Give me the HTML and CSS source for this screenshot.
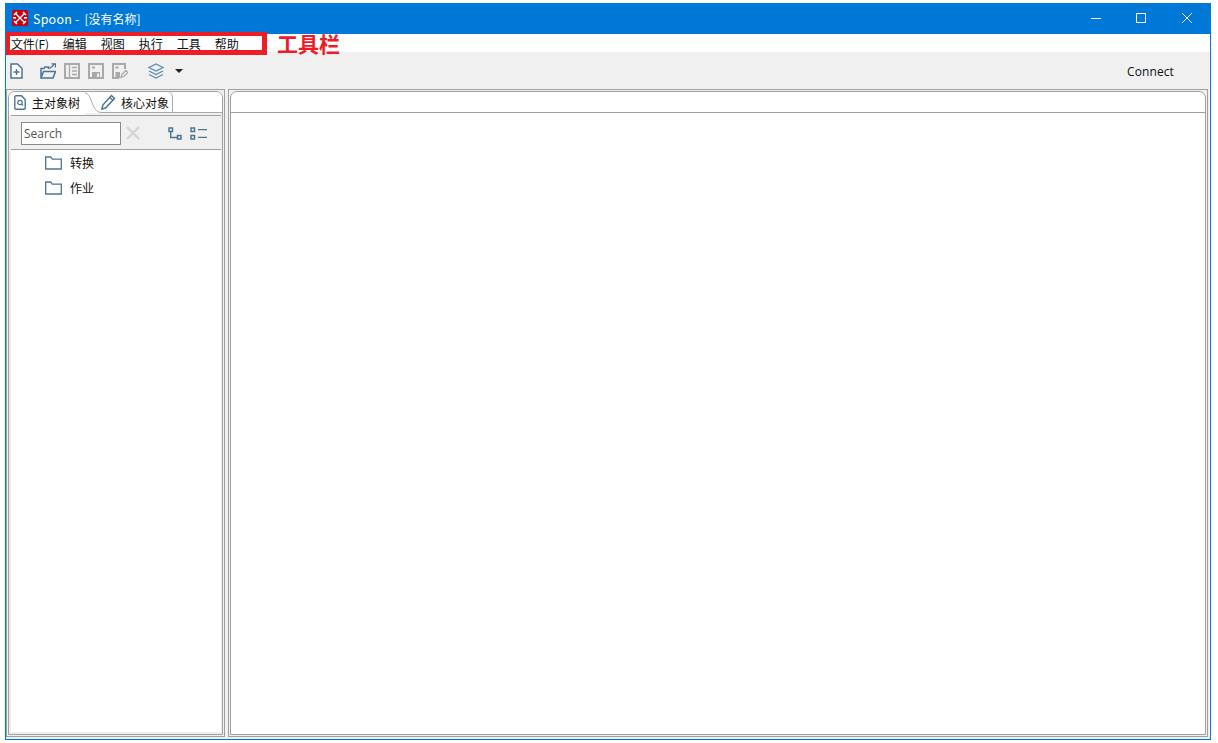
FILE: index.html
```html
<!DOCTYPE html>
<html lang="zh-CN">
<head>
<meta charset="utf-8">
<title>Spoon</title>
<link rel="stylesheet" href="styles.css">
</head>
<body>
<div class="window">
  <header class="titlebar">
    <svg class="app-icon" width="16" height="16" viewBox="0 0 16 16">
      <rect width="16" height="16" rx="1.500" fill="#c8000f"/>
      <path d="M3.500 3.500l9 9M12.500 3.500l-9 9" stroke="#fff" stroke-width="1.400" fill="none"/>
      <path d="M2 5l3-3M11 2l3 3M2 11l3 3M11 14l3-3" stroke="#fff" stroke-width="1.500" fill="none"/>
      <rect x="1" y="7" width="3" height="1.600" fill="#fff"/>
      <rect x="12" y="7" width="3" height="1.600" fill="#fff"/>
    </svg>
    <span class="title">Spoon - <span class="title-cjk">[没有名称]</span></span>
    <div class="win-controls">
      <svg class="win-btn" width="46" height="30" viewBox="0 0 46 30"><path d="M18 15.500h10" stroke="#fff"/></svg>
      <svg class="win-btn" width="46" height="30" viewBox="0 0 46 30"><rect x="18.500" y="10.500" width="9" height="9" fill="none" stroke="#fff"/></svg>
      <svg class="win-btn" width="46" height="30" viewBox="0 0 46 30"><path d="M18 10l10 10M28 10L18 20" stroke="#fff" fill="none"/></svg>
    </div>
  </header>
  <nav class="menubar">
    <span class="menu-item menu-first">文件(<u>F</u>)</span>
    <span class="menu-item">编辑</span>
    <span class="menu-item">视图</span>
    <span class="menu-item">执行</span>
    <span class="menu-item">工具</span>
    <span class="menu-item">帮助</span>
  </nav>
  <div class="toolbar">
    <svg class="tool tool-new" width="16" height="16" viewBox="0 0 16 16"><path d="M3 1h6.500L14 5.500V15H3z" fill="#fff" stroke="#4a7596" stroke-width="1.500"/><path d="M8.500 6v6M5.500 9h6" stroke="#4a7596" stroke-width="1.400"/></svg>
    <svg class="tool" width="16" height="16" viewBox="0 0 16 16"><path d="M1 15V5.500h3l1-1.500h3.500v2M1 15l2.500-6.500H15.500L13 15z" fill="none" stroke="#4a7596" stroke-width="1.500"/><path d="M9.500 5.500L15 1M11.500 .8H15.500V4.500" fill="none" stroke="#4a7596" stroke-width="1.300"/></svg>
    <svg class="tool" width="16" height="16" viewBox="0 0 16 16"><rect x="1" y="1" width="14" height="14" fill="none" stroke="#a9a9a9" stroke-width="2"/><path d="M5.500 1v14M8 4.500h5M8 8h5M8 11.500h5" stroke="#a9a9a9" stroke-width="1.300"/></svg>
    <svg class="tool" width="16" height="16" viewBox="0 0 16 16"><rect x="1" y="1" width="14" height="14" fill="none" stroke="#a9a9a9" stroke-width="2"/><path d="M4 9h8v6H4z" fill="#a9a9a9"/><path d="M9 10.500h2V14H9z" fill="#f0f0f0"/><path d="M4 4.500h3" stroke="#a9a9a9" stroke-width="2"/></svg>
    <svg class="tool tool-saveas" width="16" height="16" viewBox="0 0 16 16"><path d="M13 6V1H1v14h6" fill="none" stroke="#a9a9a9" stroke-width="2"/><path d="M3.500 9H8v6H3.500z" fill="#a9a9a9"/><path d="M3.500 4.500h3" stroke="#a9a9a9" stroke-width="2"/><path d="M9 14.500l.8-3 4-4 2 2-4 4z" fill="none" stroke="#a9a9a9" stroke-width="1.300"/></svg>
    <svg class="tool tool-layers" width="16" height="16" viewBox="0 0 16 16"><path d="M8 1l7 3.500L8 8 1 4.500z" fill="none" stroke="#5f8cad" stroke-width="1.300"/><path d="M1 8l7 3.500L15 8M1 11.500L8 15l7-3.500" fill="none" stroke="#5f8cad" stroke-width="1.300"/></svg>
    <span class="caret"></span>
    <span class="connect">Connect</span>
  </div>
  <main class="workspace">
    <section class="side">
      <div class="side-inner">
        <div class="tabs">
          <div class="tab tab-active">
            <svg width="12" height="15" viewBox="0 0 12 15"><path d="M.8 2a1.200 1.200 0 0 1 1.200-1.200h5.500l3.700 3.700V13a1.200 1.200 0 0 1-1.200 1.200H2A1.200 1.200 0 0 1 .8 13z" fill="#fff" stroke="#4a7596" stroke-width="1.400"/><circle cx="6" cy="7.500" r="2.200" fill="none" stroke="#4a7596" stroke-width="1.200"/><path d="M7.500 9l1.500 1.500" stroke="#4a7596" stroke-width="1.200"/></svg>
            <span>主对象树</span>
          </div>
          <svg class="tab-curve" width="16" height="21" viewBox="0 0 16 21"><rect width="16" height="21" fill="#fff"/><path d="M0 1c5 0 6 9 9 14 2 4 4 5 7 5.500" fill="none" stroke="#a9a9a9"/></svg>
          <div class="tab tab-other">
            <svg width="15" height="16" viewBox="0 0 15 16"><path d="M1 15l.8-4L10.500 1.500l3 3L4.500 14z" fill="none" stroke="#4a7596" stroke-width="1.500"/><path d="M9 3.500l3 3" stroke="#4a7596" stroke-width="1.200"/></svg>
            <span>核心对象</span>
          </div>
          <div class="tab-fill"></div>
        </div>
        <div class="search-row">
          <div class="search-input">Search</div>
          <svg class="search-clear" width="14" height="14" viewBox="0 0 14 14"><path d="M1 1l12 12M13 1L1 13" stroke="#d4d4d4" stroke-width="2.400"/></svg>
          <div class="search-tools">
            <svg width="14" height="13" viewBox="0 0 14 13"><path d="M1 1h3.500v3.500H1zM9.500 8.500H13V12H9.500z" fill="none" stroke="#4a7596" stroke-width="1.500"/><path d="M2.700 4.500v6h6.800" fill="none" stroke="#4a7596" stroke-width="1.500"/></svg>
            <svg width="17" height="13" viewBox="0 0 17 13"><path d="M1 1h3.500v3.500H1zM1 8.500h3.500V12H1z" fill="none" stroke="#4a7596" stroke-width="1.500"/><path d="M8 2.700h9M8 10.300h9" stroke="#4a7596" stroke-width="1.300"/></svg>
          </div>
        </div>
        <ul class="tree">
          <li class="tree-row">
            <svg width="17" height="14" viewBox="0 0 17 14"><path d="M.7 13V1h5l1.500 2.200h9.100V13z" fill="none" stroke="#4a7596" stroke-width="1.300"/></svg>
            <span>转换</span>
          </li>
          <li class="tree-row">
            <svg width="17" height="14" viewBox="0 0 17 14"><path d="M.7 13V1h5l1.500 2.200h9.100V13z" fill="none" stroke="#4a7596" stroke-width="1.300"/></svg>
            <span>作业</span>
          </li>
        </ul>
      </div>
    </section>
    <section class="canvas">
      <div class="canvas-inner">
        <div class="canvas-head"></div>
      </div>
    </section>
  </main>
</div>
<div class="annotation-box"></div>
<div class="annotation-label">工具栏</div>
</body>
</html>
```
FILE: styles.css
```css
* { box-sizing: border-box; }
html, body { margin: 0; height: 100%; background: #fff; overflow: hidden; }
body {
  padding: 3px 7px 3px 5px;
  font-family: "Noto Sans CJK SC", "Liberation Sans", sans-serif;
  font-size: 12px;
  color: #111;
}
.window {
  height: 737px;
  border: 1px solid #0078d7;
  border-top: 0;
  display: flex;
  flex-direction: column;
  background: #f0f0f0;
}
.titlebar {
  height: 31px;
  flex: none;
  background: #0078d7;
  color: #fff;
  display: flex;
  align-items: flex-start;
  padding-left: 6px;
}
.app-icon { flex: none; margin: 7px 5px 0 0; }
.title { font-size: 12.5px; line-height: 31px; letter-spacing: .2px; }
.title-cjk { font-size: 12px; letter-spacing: 0; margin-left: 2px; }
.win-controls { margin-left: auto; display: flex; }
.win-btn { display: block; }
.win-btn:first-child { margin-right: -1px; }
.menubar {
  height: 18px;
  flex: none;
  background: #fff;
  display: flex;
  align-items: center;
  padding: 2px 0 0 5px;
  gap: 14px;
}
.menu-item { line-height: 16px; }
.menu-first { letter-spacing: -.2px; }
.toolbar {
  height: 37px;
  flex: none;
  display: flex;
  align-items: center;
  padding: 1px 36px 0 2px;
  gap: 8px;
  background: #f0f0f0;
}
.tool { flex: none; display: block; }
.tool-new { margin-right: 8px; }
.tool-saveas { margin-right: 12px; }
.caret {
  width: 0; height: 0;
  border-left: 4px solid transparent;
  border-right: 4px solid transparent;
  border-top: 4px solid #222;
  margin-left: 3px;
}
.connect { margin-left: auto; font-family: "Open Sans", "Liberation Sans", sans-serif; font-size: 12px; letter-spacing: .1px; }
.workspace {
  flex: 1;
  min-height: 0;
  display: flex;
  gap: 3px;
  padding: 0 2px 2px 0;
}
.side {
  width: 219px;
  flex: none;
  border: 1px solid #a0a0a0;
  padding: 1px;
  background: #f0f0f0;
}
.side-inner {
  height: 100%;
  display: flex;
  flex-direction: column;
  border: 1px solid #a0a0a0;
  border-radius: 7px 7px 0 0;
  padding: 0 1px 2px 2px;
  background: #ededed;
}
.tabs {
  height: 23px;
  flex: none;
  display: flex;
  align-items: flex-start;
  background: #f0f0f0;
  margin-left: -2px;
  margin-right: -1px;
  border-radius: 6px 6px 0 0;
  overflow: hidden;
}
.tab { display: flex; align-items: center; height: 21px; background: #fff; }
.tab-active { height: 23px; padding: 0 0 2px 5px; gap: 6px; width: 76px; flex: none; }
.tab-curve { flex: none; display: block; }
.tab-other { flex: none; width: 72px; gap: 5px; border-right: 1px solid #a9a9a9; border-bottom: 1px solid #a9a9a9; border-radius: 0 6px 0 0; }
.tab-fill { flex: 1; height: 21px; background: #fff; border-bottom: 1px solid #a9a9a9; }
.search-row {
  height: 35px;
  flex: none;
  border-top: 1px solid #a0a0a0;
  border-bottom: 1px solid #a0a0a0;
  background: #f0f0f0;
  display: flex;
  align-items: center;
  padding: 1px 0 0 10px;
}
.search-input {
  width: 100px;
  height: 23px;
  border: 1px solid #8a8a8a;
  background: #fff;
  color: #555;
  font-family: "Open Sans", "Liberation Sans", sans-serif;
  font-size: 12px;
  line-height: 21px;
  padding-left: 2px;
}
.search-clear { flex: none; margin-left: 5px; }
.search-tools { display: flex; gap: 8px; margin-left: 28px; }
.tree { list-style: none; margin: 0; padding: 0 0 0 34px; flex: 1; background: #fff; }
.tree-row { height: 25px; display: flex; align-items: center; gap: 8px; }
.canvas {
  flex: 1;
  min-width: 0;
  border: 1px solid #a0a0a0;
  padding: 1px;
  background: #f0f0f0;
}
.canvas-inner {
  height: 100%;
  border: 1px solid #a0a0a0;
  border-radius: 7px 7px 0 0;
  background: #fff;
}
.canvas-head { height: 21px; border-bottom: 1px solid #a0a0a0; }
.annotation-box {
  position: absolute;
  left: 6px; top: 32px;
  width: 261px; height: 23px;
  border-style: solid;
  border-color: #ee1c25;
  border-width: 4px 5px 5px 4px;
}
.annotation-label {
  position: absolute;
  left: 277px; top: 28px;
  font-size: 21px;
  line-height: 30px;
  font-weight: 700;
  color: #ee1c25;
}
```
